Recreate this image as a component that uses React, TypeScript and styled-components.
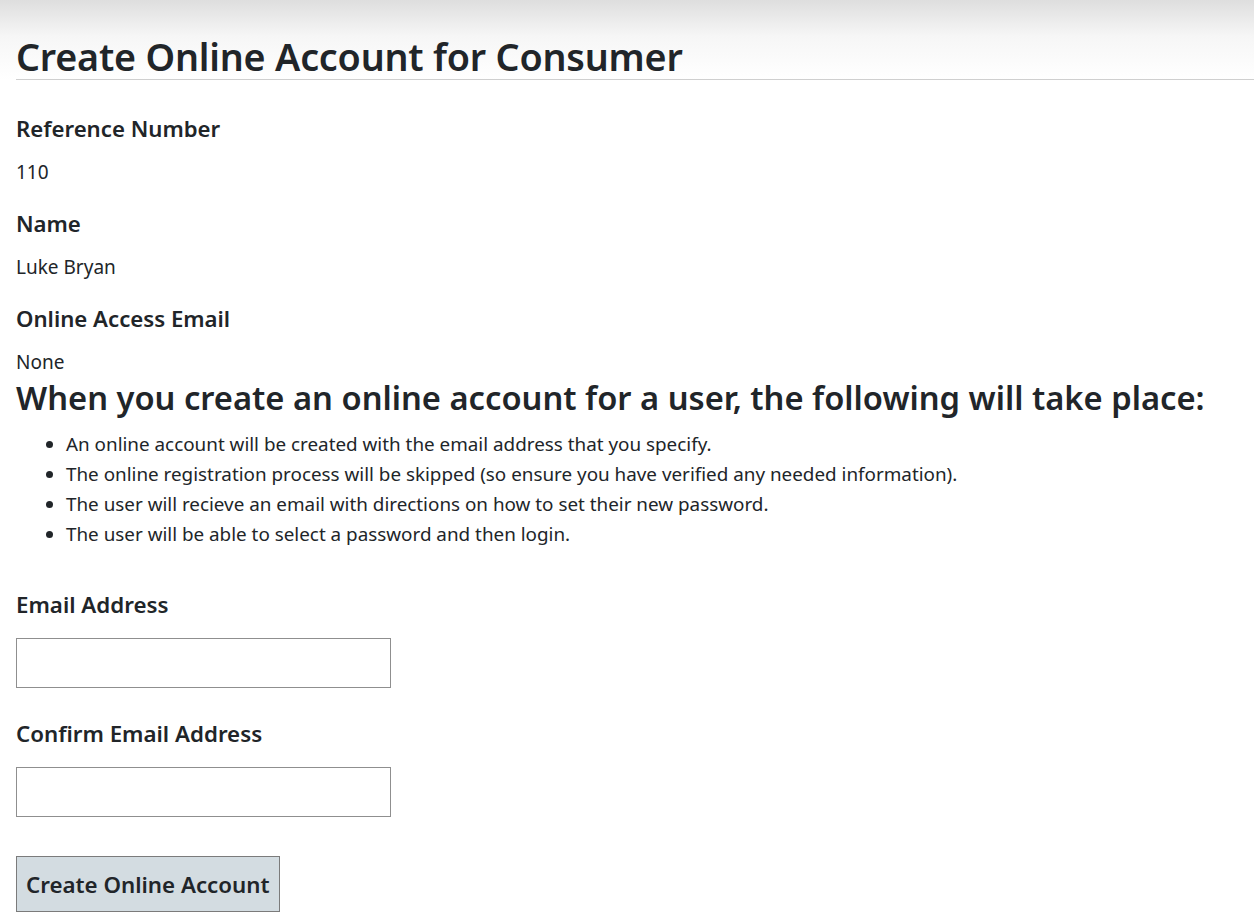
import styled, { createGlobalStyle } from 'styled-components'

const GlobalStyle = createGlobalStyle`
  html, body {
    margin: 0;
    padding: 0;
    background: #fff;
  }
  body {
    font-family: 'Noto Sans', 'Open Sans', sans-serif;
    color: #212529;
    font-size: 19px;
    line-height: 1.5;
  }
  * {
    box-sizing: border-box;
  }
`

const details = [
  { label: 'Reference Number', value: '110' },
  { label: 'Name', value: 'Luke Bryan' },
  { label: 'Online Access Email', value: 'None' },
]

const steps = [
  'An online account will be created with the email address that you specify.',
  'The online registration process will be skipped (so ensure you have verified any needed information).',
  'The user will recieve an email with directions on how to set their new password.',
  'The user will be able to select a password and then login.',
]

const App = () => {
  return (
    <>
      <GlobalStyle />
      <Header>
        <Title>Create Online Account for Consumer</Title>
      </Header>
      <Page>
        {details.map((d) => (
          <Detail key={d.label}>
            <FieldLabel>{d.label}</FieldLabel>
            <FieldValue>{d.value}</FieldValue>
          </Detail>
        ))}
        <SubTitle>When you create an online account for a user, the following will take place:</SubTitle>
        <StepList>
          {steps.map((s) => (
            <li key={s}>{s}</li>
          ))}
        </StepList>
        <Form onSubmit={(e) => e.preventDefault()}>
          <FormGroup>
            <InputLabel htmlFor="email">Email Address</InputLabel>
            <TextInput id="email" type="email" />
          </FormGroup>
          <FormGroup>
            <InputLabel htmlFor="confirmEmail">Confirm Email Address</InputLabel>
            <TextInput id="confirmEmail" type="email" />
          </FormGroup>
          <SubmitButton type="submit">Create Online Account</SubmitButton>
        </Form>
      </Page>
    </>
  )
}

const Header = styled.header`
  background: linear-gradient(to bottom, #dedede 0%, #f6f6f6 45%, #ffffff 100%);
  padding: 35px 0 0 16px;
`

const Title = styled.h1`
  margin: 0;
  font-size: 37.7px;
  font-weight: 600;
  line-height: 44px;
  border-bottom: 1px solid #cfcfcf;
  letter-spacing: -0.2px;
`

const Page = styled.main`
  padding: 34px 16px 0 16px;
`

const Detail = styled.div`
  margin-bottom: 22px;

  &:last-of-type {
    margin-bottom: 0;
  }
`

const FieldLabel = styled.h5`
  margin: 0 0 13px 0;
  font-size: 22.2px;
  font-weight: 600;
  line-height: 30px;
`

const FieldValue = styled.p`
  margin: 0;
  font-size: 19px;
  line-height: 30px;
`

const SubTitle = styled.h2`
  margin: 0 0 10px 0;
  font-size: 32.7px;
  font-weight: 600;
  line-height: 42px;
`

const StepList = styled.ul`
  margin: 0 0 41px 0;
  padding-left: 50px;
  font-size: 18.85px;
  line-height: 30px;
`

const Form = styled.form`
  display: flex;
  flex-direction: column;
  align-items: flex-start;
`

const FormGroup = styled.div`
  display: flex;
  flex-direction: column;
  align-items: flex-start;
  margin-bottom: 31px;
`

const InputLabel = styled.label`
  font-size: 22.3px;
  font-weight: 600;
  line-height: 30px;
  margin-bottom: 18px;
`

const TextInput = styled.input`
  width: 375px;
  height: 50px;
  border: 1px solid #8f8f8f;
  border-radius: 0;
  padding: 6px 12px;
  font-size: 20px;
  font-family: inherit;
  background: #fff;

  &:focus {
    outline: none;
  }
`

const SubmitButton = styled.button`
  margin-top: 8px;
  height: 56px;
  padding: 0 9px;
  background: #d3dce1;
  border: 1px solid #7b7b7b;
  border-radius: 0;
  font-family: inherit;
  font-size: 22.3px;
  font-weight: 600;
  color: #212529;
  cursor: pointer;
`

export default App
